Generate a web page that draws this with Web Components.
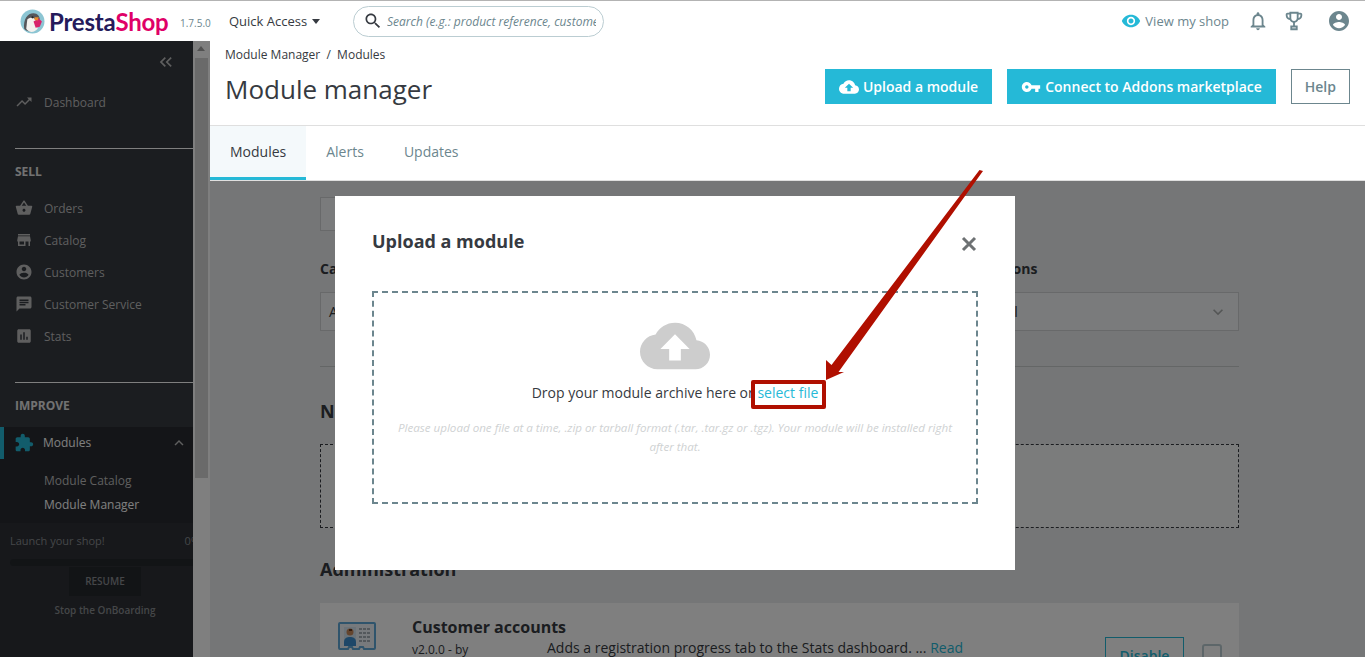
<!doctype html>
<html lang="en">
<head>
<meta charset="utf-8">
<title>Module manager</title>
<style>
  html, body { margin: 0; height: 657px; overflow: hidden; background: #ebedee; }
  body { font-family: "Open Sans", "Liberation Sans", sans-serif; color: #363a41; position: relative; }
  .app { display: grid; grid-template-columns: 210px 1fr; grid-template-rows: 41px 1fr; height: 657px; }
  ps-header { grid-column: 1 / 3; }
  .main { display: flex; flex-direction: column; min-width: 0; overflow: hidden; }
</style>
</head>
<body>
<div class="app">
  <ps-header></ps-header>
  <ps-sidebar></ps-sidebar>
  <div class="main">
    <ps-page-head></ps-page-head>
    <ps-module-list></ps-module-list>
  </div>
</div>
<ps-upload-modal></ps-upload-modal>

<script>
(() => {
  const ICONS = {
    trending: 'M16 6l2.29 2.29-4.88 4.88-4-4L2 16.59 3.41 18l6-6 4 4 6.3-6.29L22 12V6z',
    basket: 'M17.21 9l-4.38-6.56c-.19-.28-.51-.42-.83-.42-.32 0-.64.14-.83.43L6.79 9H2c-.55 0-1 .45-1 1 0 .09.01.18.04.27l2.54 9.27c.23.84 1 1.46 1.92 1.46h13c.92 0 1.69-.62 1.93-1.46l2.54-9.27L23 10c0-.55-.45-1-1-1h-4.79zM9 9l3-4.4L15 9H9zm3 8c-1.1 0-2-.9-2-2s.9-2 2-2 2 .9 2 2-.9 2-2 2z',
    store: 'M20 4H4v2h16V4zm1 10v-2l-1-5H4l-1 5v2h1v6h10v-6h4v6h2v-6h1zm-9 4H6v-4h6v4z',
    account: 'M12 2C6.48 2 2 6.48 2 12s4.48 10 10 10 10-4.48 10-10S17.52 2 12 2zm0 3c1.66 0 3 1.34 3 3s-1.34 3-3 3-3-1.34-3-3 1.34-3 3-3zm0 14.2c-2.5 0-4.71-1.28-6-3.22.03-1.99 4-3.08 6-3.08 1.99 0 5.97 1.09 6 3.08-1.29 1.94-3.5 3.22-6 3.22z',
    chat: 'M20 2H4c-1.1 0-1.99.9-1.99 2L2 22l4-4h14c1.1 0 2-.9 2-2V4c0-1.1-.9-2-2-2zM6 9h12v2H6V9zm8 5H6v-2h8v2zm4-6H6V6h12v2z',
    stats: 'M19 3H5c-1.1 0-2 .9-2 2v14c0 1.1.9 2 2 2h14c1.1 0 2-.9 2-2V5c0-1.1-.9-2-2-2zM9 17H7v-7h2v7zm4 0h-2V7h2v10zm4 0h-2v-4h2v4z',
    puzzle: 'M20.5 11H19V7c0-1.1-.9-2-2-2h-4V3.5C13 2.12 11.88 1 10.5 1S8 2.12 8 3.5V5H4c-1.1 0-1.99.9-1.99 2v3.8H3.5c1.49 0 2.7 1.21 2.7 2.7s-1.21 2.7-2.7 2.7H2V20c0 1.1.9 2 2 2h3.8v-1.5c0-1.49 1.21-2.7 2.7-2.7 1.49 0 2.7 1.21 2.7 2.7V22H17c1.1 0 2-.9 2-2v-4h1.5c1.38 0 2.5-1.12 2.5-2.5S21.88 11 20.5 11z',
    less: 'M12 8l-6 6 1.41 1.41L12 10.83l4.59 4.58L18 14z',
    more: 'M16.59 8.59L12 13.17 7.41 8.59 6 10l6 6 6-6z',
    search: 'M15.5 14h-.79l-.28-.27C15.41 12.59 16 11.11 16 9.5 16 5.91 13.09 3 9.5 3S3 5.91 3 9.5 5.91 16 9.5 16c1.61 0 3.09-.59 4.23-1.57l.27.28v.79l5 4.99L20.49 19l-4.99-5zm-6 0C7.01 14 5 11.99 5 9.5S7.01 5 9.5 5 14 7.01 14 9.5 11.99 14 9.5 14z',
    eye: 'M12 4.5C7 4.5 2.73 7.61 1 12c1.73 4.39 6 7.5 11 7.5s9.27-3.11 11-7.5c-1.73-4.39-6-7.5-11-7.5zM12 17c-2.76 0-5-2.24-5-5s2.24-5 5-5 5 2.24 5 5-2.24 5-5 5zm0-8c-1.66 0-3 1.34-3 3s1.34 3 3 3 3-1.34 3-3-1.34-3-3-3z',
    bell: 'M12 22c1.1 0 2-.9 2-2h-4c0 1.1.89 2 2 2zm6-6v-5c0-3.07-1.64-5.64-4.5-6.32V4c0-.83-.67-1.5-1.5-1.5s-1.5.67-1.5 1.5v.68C7.63 5.36 6 7.92 6 11v5l-2 2v1h16v-1l-2-2zm-2 1H8v-6c0-2.48 1.51-4.5 4-4.5s4 2.02 4 4.5v6z',
    trophy: 'M19 3h-2V2H7v1H5c-1.1 0-2 .9-2 2v1c0 2.55 1.92 4.63 4.39 4.94.63 1.5 1.98 2.63 3.61 2.96V17H8v5h8v-5h-3v-3.1c1.63-.33 2.98-1.46 3.61-2.96C19.08 10.63 21 8.55 21 6V5c0-1.1-.9-2-2-2zM5 6V5h2v3.82C5.84 8.4 5 7.3 5 6zm7 6c-1.65 0-3-1.35-3-3V4h6v5c0 1.65-1.35 3-3 3zm7-6c0 1.3-.84 2.4-2 2.82V5h2v1zM10 19h4v1h-4z',
    cloud: 'M19.35 10.04C18.67 6.59 15.64 4 12 4 9.11 4 6.6 5.64 5.35 8.04 2.34 8.36 0 10.91 0 14c0 3.31 2.69 6 6 6h13c2.76 0 5-2.24 5-5 0-2.64-2.05-4.78-4.65-4.96zM14 13v4h-4v-4H7l5-5 5 5h-3z',
    key: 'M12.65 10C11.83 7.67 9.61 6 7 6c-3.31 0-6 2.69-6 6s2.69 6 6 6c2.61 0 4.83-1.67 5.65-4H17v4h4v-4h2v-4H12.65zM7 14c-1.1 0-2-.9-2-2s.9-2 2-2 2 .9 2 2-.9 2-2 2z',
    collapse: 'M11.7 6l1.4 1.4L8.5 12l4.6 4.6-1.4 1.4-6-6zM18.7 6l1.4 1.4-4.6 4.6 4.6 4.6-1.4 1.4-6-6z'
  };

  class PsIcon extends HTMLElement {
    static get observedAttributes() { return ['name', 'size']; }
    constructor() {
      super();
      this.attachShadow({ mode: 'open' });
    }
    attributeChangedCallback() { this._draw(); }
    connectedCallback() { this._draw(); }
    _draw() {
      const size = this.getAttribute('size') || 24;
      const d = ICONS[this.getAttribute('name')] || '';
      this.shadowRoot.innerHTML = `
        <style>:host { display: inline-flex; flex: none; width: ${size}px; height: ${size}px; } svg { display: block; width: 100%; height: 100%; fill: currentColor; }</style>
        <svg viewBox="0 0 24 24"><path d="${d}"/></svg>`;
    }
  }
  customElements.define('ps-icon', PsIcon);

  class PsHeader extends HTMLElement {
    constructor() {
      super();
      this.attachShadow({ mode: 'open' }).innerHTML = `
        <style>
          :host { display: flex; align-items: center; position: relative; z-index: 20; height: 40px; border-top: 1px solid #b3b3b3; background: #fff; font-size: 13px; color: #363a41; white-space: nowrap; }
          .logo { display: flex; align-items: center; margin-left: 20px; width: 160px; gap: 4px; }
          .logo svg { flex: none; width: 25px; height: 25px; }
          .word { font-family: "Lato", "Open Sans", sans-serif; font-size: 24px; font-weight: 700; letter-spacing: -.2px; color: #251b5b; }
          .word b { color: #df0067; font-weight: 700; }
          .ver { width: 49px; font-size: 10px; color: #6c868e; padding-top: 3px; }
          .quick { display: flex; align-items: center; gap: 5px; width: 124px; }
          .caret { width: 0; height: 0; border: 4px solid transparent; border-top: 5px solid #363a41; border-bottom: 0; }
          .search { display: flex; align-items: center; gap: 4px; box-sizing: border-box; width: 251px; height: 31px; padding: 0 7px 0 9px; border: 1px solid #bbcdd2; border-radius: 16px; color: #363a41; overflow: hidden; }
          .search span { font-size: 12px; font-style: italic; color: #6c868e; overflow: hidden; }
          .right { margin-left: auto; display: flex; align-items: center; color: #6c868e; }
          .view { display: flex; align-items: center; gap: 4px; margin-right: 18px; }
          .view ps-icon { color: #25b9d7; }
          .bell { margin-right: 14px; }
          .trophy { margin-right: 22px; }
          .avatar { margin-right: 14px; }
        </style>
        <div class="logo">
          <svg viewBox="0 0 24 24" aria-hidden="true">
            <circle cx="12" cy="12" r="11.5" fill="#8cc5d3"/>
            <path d="M4 19C3 10 7 4 13 4c4 0 6 3 6 6-2 1-3 1-4 1l1 8c-2 3-9 4-12 0z" fill="#55565a"/>
            <path d="M7 10c2-2 6-2 8 0l2 9c-3 4-9 4-11 0z" fill="#f3f1ee"/>
            <circle cx="12" cy="8" r="1" fill="#222"/>
            <path d="M13 12l5-3 3 3-2 5-4 1z" fill="#d8246c"/>
            <path d="M14 8l4 0-1 3-3-.5z" fill="#e98b2d"/>
          </svg>
          <span class="word">Presta<b>Shop</b></span>
        </div>
        <span class="ver">1.7.5.0</span>
        <div class="quick">Quick Access <span class="caret"></span></div>
        <div class="search"><ps-icon name="search" size="20"></ps-icon><span>Search (e.g.: product reference, customer name…)</span></div>
        <div class="right">
          <div class="view"><ps-icon name="eye" size="20"></ps-icon>View my shop</div>
          <ps-icon class="bell" name="bell" size="22"></ps-icon>
          <ps-icon class="trophy" name="trophy" size="22"></ps-icon>
          <ps-icon class="avatar" name="account" size="24"></ps-icon>
        </div>`;
    }
  }
  customElements.define('ps-header', PsHeader);

  class PsNavItem extends HTMLElement {
    constructor() {
      super();
      this.attachShadow({ mode: 'open' }).innerHTML = `
        <style>
          :host { display: flex; align-items: center; height: 32px; padding-left: 15px; gap: 11px; font-size: 12px; color: #bebebe; }
          ps-icon { color: #bebebe; }
        </style>
        <ps-icon size="18"></ps-icon><slot></slot>`;
    }
    connectedCallback() {
      this.shadowRoot.querySelector('ps-icon').setAttribute('name', this.getAttribute('icon'));
    }
  }
  customElements.define('ps-nav-item', PsNavItem);

  class PsSidebar extends HTMLElement {
    constructor() {
      super();
      this.attachShadow({ mode: 'open' }).innerHTML = `
        <style>
          :host { display: flex; height: 616px; width: 210px; overflow: hidden; }
          nav { width: 193px; height: 616px; flex: none; background: #363a41; overflow: hidden; color: #bebebe; }
          .collapse { display: flex; justify-content: flex-end; height: 45px; padding: 11px 18px 0 0; box-sizing: border-box; color: #bebebe; }
          hr { height: 1px; border: 0; margin: 0 0 0 15px; background: #fff; }
          h4 { margin: 0; padding-left: 15px; font-size: 12px; line-height: 16px; font-weight: 700; }
          .sell { margin: 15px 0 12px; color: #e4e4e4; }
          .improve { margin: 15px 0 13px; color: #e4e4e4; }
          .open { background: #282b30; height: 96px; position: relative; }
          .row { display: flex; align-items: center; height: 32px; padding: 0 0 1px 15px; box-sizing: border-box; gap: 9px; font-size: 12px; color: #fff; box-shadow: inset 4px 0 0 #25b9d7; }
          .row ps-icon:first-child { color: #25b9d7; margin-left: -1px; }
          .row ps-icon:last-child { margin-left: auto; margin-right: 5px; color: #bebebe; }
          .sub { padding: 9px 0 0 44px; font-size: 12px; line-height: 24px; }
          .sub div:last-child { color: #fff; }
          .onboard { box-sizing: border-box; width: 210px; padding: 10px 10px 0; background: #2e3137; height: 134px; font-size: 11px; color: #8a8d91; }
          .top { display: flex; justify-content: space-between; line-height: 16px; }
          .bar { height: 7px; margin: 10px -10px 0 0; border-radius: 4px; background: #25282d; }
          .resume { display: block; width: 72px; margin: 1px 0 0 59px; background: #25282d; text-align: center; font-size: 10px; font-weight: 600; line-height: 29px; color: #8a8d91; }
          .stop { margin-top: 7px; text-align: center; font-size: 10px; font-weight: 600; line-height: 14px; }
          .bar-y { flex: 1; background: #fff; position: relative; }
          .thumb { position: absolute; left: 2px; right: 2px; top: 17px; height: 420px; background: #d4d4d4; }
          .up { position: absolute; left: 4px; top: 5px; width: 0; height: 0; border: 4px solid transparent; border-bottom: 5px solid #a3a3a3; border-top: 0; }
        </style>
        <nav>
          <div class="collapse"><ps-icon name="collapse" size="20"></ps-icon></div>
          <ps-nav-item icon="trending">Dashboard</ps-nav-item>
          <hr style="margin-top:30px">
          <h4 class="sell">SELL</h4>
          <ps-nav-item icon="basket">Orders</ps-nav-item>
          <ps-nav-item icon="store">Catalog</ps-nav-item>
          <ps-nav-item icon="account">Customers</ps-nav-item>
          <ps-nav-item icon="chat">Customer Service</ps-nav-item>
          <ps-nav-item icon="stats">Stats</ps-nav-item>
          <hr style="margin-top:30px">
          <h4 class="improve">IMPROVE</h4>
          <div class="open">
            <div class="row"><ps-icon name="puzzle" size="20"></ps-icon>Modules<ps-icon name="less" size="18"></ps-icon></div>
            <div class="sub" style="padding-top:10px"><div>Module Catalog</div><div>Module Manager</div></div>
          </div>
          <div class="onboard">
            <div class="top"><span>Launch your shop!</span><span>0%</span></div>
            <div class="bar"></div>
            <span class="resume">RESUME</span>
            <div class="stop">Stop the OnBoarding</div>
          </div>
        </nav>
        <div class="bar-y"><div class="up"></div><div class="thumb"></div></div>`;
    }
  }
  customElements.define('ps-sidebar', PsSidebar);

  class PsPageHead extends HTMLElement {
    constructor() {
      super();
      this.attachShadow({ mode: 'open' }).innerHTML = `
        <style>
          :host { display: block; position: relative; z-index: 20; background: #fff; }
          .top { display: flex; height: 84px; box-sizing: content-box; border-bottom: 1px solid #dfdfdf; padding: 0 15px; }
          .titles { flex: 1; }
          .crumb { font-size: 12px; line-height: 16px; margin-top: 6px; color: #363a41; }
          h1 { margin: 7px 0 0; font-size: 26px; line-height: 38px; font-weight: 400; color: #363a41; }
          .btns { display: flex; gap: 15px; padding-top: 28px; }
          .btn { display: flex; align-items: center; gap: 4px; box-sizing: border-box; height: 35px; padding: 0 14px; background: #25b9d7; color: #fff; font-size: 14px; font-weight: 600; white-space: nowrap; }
          .help { background: #fff; border: 1px solid #6c868e; color: #6c868e; padding: 0 13px; }
          .tabs { display: flex; height: 54px; border-bottom: 1px solid #dfdfdf; font-size: 14px; color: #6c868e; }
          .tab { display: flex; align-items: center; padding: 0 20px 4px; box-sizing: border-box; }
          .tab.on { color: #363a41; background: #f4f9fb; box-shadow: inset 0 -3px 0 #25b9d7; }
        </style>
        <div class="top">
          <div class="titles">
            <div class="crumb">Module Manager&nbsp; /&nbsp; Modules</div>
            <h1>Module manager</h1>
          </div>
          <div class="btns">
            <div class="btn"><ps-icon name="cloud" size="20"></ps-icon>Upload a module</div>
            <div class="btn"><ps-icon name="key" size="20"></ps-icon>Connect to Addons marketplace</div>
            <div class="btn help">Help</div>
          </div>
        </div>
        <div class="tabs">
          <div class="tab on">Modules</div>
          <div class="tab">Alerts</div>
          <div class="tab">Updates</div>
        </div>`;
    }
  }
  customElements.define('ps-page-head', PsPageHead);

  class PsModuleList extends HTMLElement {
    constructor() {
      super();
      this.attachShadow({ mode: 'open' }).innerHTML = `
        <style>
          :host { display: block; padding: 16px 126px 0 110px; font-size: 14px; color: #363a41; }
          .box { background: #f5f7f8; border: 1px solid #d0d3d4; box-sizing: border-box; }
          .find { width: 500px; height: 34px; }
          .filters { display: grid; grid-template-columns: repeat(3, 1fr); gap: 28px; margin-top: 28px; }
          label { display: block; font-weight: 700; line-height: 20px; margin-bottom: 13px; }
          .sel { height: 39px; display: flex; align-items: center; justify-content: space-between; padding: 0 10px 0 8px; color: #363a41; }
          .sel ps-icon { color: #a9acad; }
          hr { height: 1px; border: 0; margin: 35px 0 0; background: #c8cccc; }
          h3 { margin: 0; font-size: 18px; line-height: 24px; font-weight: 700; }
          .drop { height: 84px; margin-top: 21px; border: 1px dashed #363a41; box-sizing: border-box; background: #f6f8f8; }
          .card { display: flex; height: 120px; margin-top: 22px; background: #fff; padding-top: 14px; box-sizing: border-box; }
          .pic { width: 38px; height: 30px; margin: 5px 36px 0 18px; flex: none; }
          .name { width: 135px; flex: none; }
          .name b { display: block; font-size: 16px; font-weight: 700; line-height: 20px; margin-bottom: 1px; white-space: nowrap; }
          .name span { font-size: 12px; line-height: 24px; }
          .desc { width: 558px; flex: none; padding-top: 21px; line-height: 19px; }
          .desc a { color: #25b9d7; }
          .dis { flex: none; box-sizing: border-box; width: 79px; height: 38px; margin-top: 20px; border: 1px solid #25b9d7; color: #25b9d7; font-weight: 600; text-align: center; line-height: 36px; }
          .chk { flex: none; width: 20px; height: 20px; margin: 27px 0 0 18px; border: 2px solid #bbcdd2; border-radius: 3px; box-sizing: border-box; }
        </style>
        <div class="box find"></div>
        <div class="filters">
          <div><label>Category</label><div class="box sel">All Categories<ps-icon name="more" size="20"></ps-icon></div></div>
          <div><label>Status</label><div class="box sel">Show all modules<ps-icon name="more" size="20"></ps-icon></div></div>
          <div><label>Bulk actions</label><div class="box sel">Uninstall<ps-icon name="more" size="20"></ps-icon></div></div>
        </div>
        <hr>
        <h3 style="margin-top:32px">Native modules</h3>
        <div class="drop"></div>
        <h3 style="margin-top:29px">Administration</h3>
        <div class="card">
          <svg class="pic" viewBox="0 0 38 30" aria-hidden="true">
            <path d="M2 1h34a1 1 0 0 1 1 1v24a1 1 0 0 1-1 1H26l-1-2h-3l-1 2h-6l-1-2h-3l-1 2H2a1 1 0 0 1-1-1V2a1 1 0 0 1 1-1z" fill="#eef5fa" stroke="#5fa8d8" stroke-width="2"/>
            <rect x="6" y="5" width="12" height="19" fill="#d6e6f2"/>
            <circle cx="12" cy="10" r="3.5" fill="#c98a5c"/>
            <path d="M11 7h3v2h-3z" fill="#6b3b1e"/>
            <path d="M6 24v-4c0-4 3-5 6-5s6 1 6 5v4z" fill="#3d8fd0"/>
            <path d="M21 7h12M21 11h12M21 15h12M21 19h12" stroke="#8f9aa3" stroke-width="1.5" stroke-dasharray="3 1"/>
          </svg>
          <div class="name"><b>Customer accounts</b><span>v2.0.0 - by</span></div>
          <div class="desc">Adds a registration progress tab to the Stats dashboard. ... <a>Read</a></div>
          <div class="dis">Disable</div>
          <div class="chk"></div>
        </div>`;
    }
  }
  customElements.define('ps-module-list', PsModuleList);

  class PsUploadModal extends HTMLElement {
    constructor() {
      super();
      this.attachShadow({ mode: 'open' }).innerHTML = `
        <style>
          :host { position: absolute; inset: 41px 0 0 0; display: block; }
          .dim { position: absolute; z-index: 10; inset: 0; background: rgba(0,0,0,.5); }
          .dialog { position: absolute; z-index: 30; left: 335px; top: 155px; box-sizing: border-box; width: 680px; height: 374px; padding: 32px 37px 0; background: #fff; }
          .head { display: flex; justify-content: space-between; align-items: center; height: 26px; }
          h4 { margin: 0; font-size: 18px; font-weight: 700; line-height: 26px; color: #363a41; }
          .x { display: block; width: 16px; height: 16px; margin: 6px 1px 0 0; }
          .drop { box-sizing: border-box; height: 213px; margin-top: 37px; padding: 25px 20px 0; border: 2px dashed #6c868e; text-align: center; }
          .cloud { display: block; width: 70px; height: 70px; margin: -7px auto 1px; color: #cdcdcd; }
          .msg { font-size: 14px; line-height: 22px; color: #363a41; }
          .msg a { color: #25b9d7; }
          .hint { margin: 14px auto 0; font-size: 11.6px; line-height: 19px; font-style: italic; color: #cfd2d3; }
          .mark { position: absolute; box-sizing: border-box; left: 416px; top: 184px; width: 75px; height: 29px; border: 4px solid #b00f00; border-radius: 2px; }
          .arrow { position: absolute; z-index: 40; left: 0; top: 0; width: 1365px; height: 616px; pointer-events: none; }
        </style>
        <div class="dim"></div>
        <div class="dialog">
          <div class="head">
            <h4>Upload a module</h4>
            <svg class="x" viewBox="0 0 16 16" aria-hidden="true"><path d="M2 2l12 12M14 2L2 14" stroke="#6d7173" stroke-width="3" fill="none"/></svg>
          </div>
          <div class="drop">
            <ps-icon class="cloud" name="cloud" size="70"></ps-icon>
            <div class="msg">Drop your module archive here or <a>select file</a></div>
            <div class="hint">Please upload one file at a time, .zip or tarball format (.tar, .tar.gz or .tgz). Your module will be installed right after that.</div>
          </div>
          <div class="mark"></div>
        </div>
        <svg class="arrow" viewBox="0 41 1365 616" aria-hidden="true">
          <polygon points="979.5,170 983,171 838.5,372 844,372 826,380 826,360 831.5,365" fill="#b00f00"/>
        </svg>`;
    }
  }
  customElements.define('ps-upload-modal', PsUploadModal);
})();
</script>
</body>
</html>
